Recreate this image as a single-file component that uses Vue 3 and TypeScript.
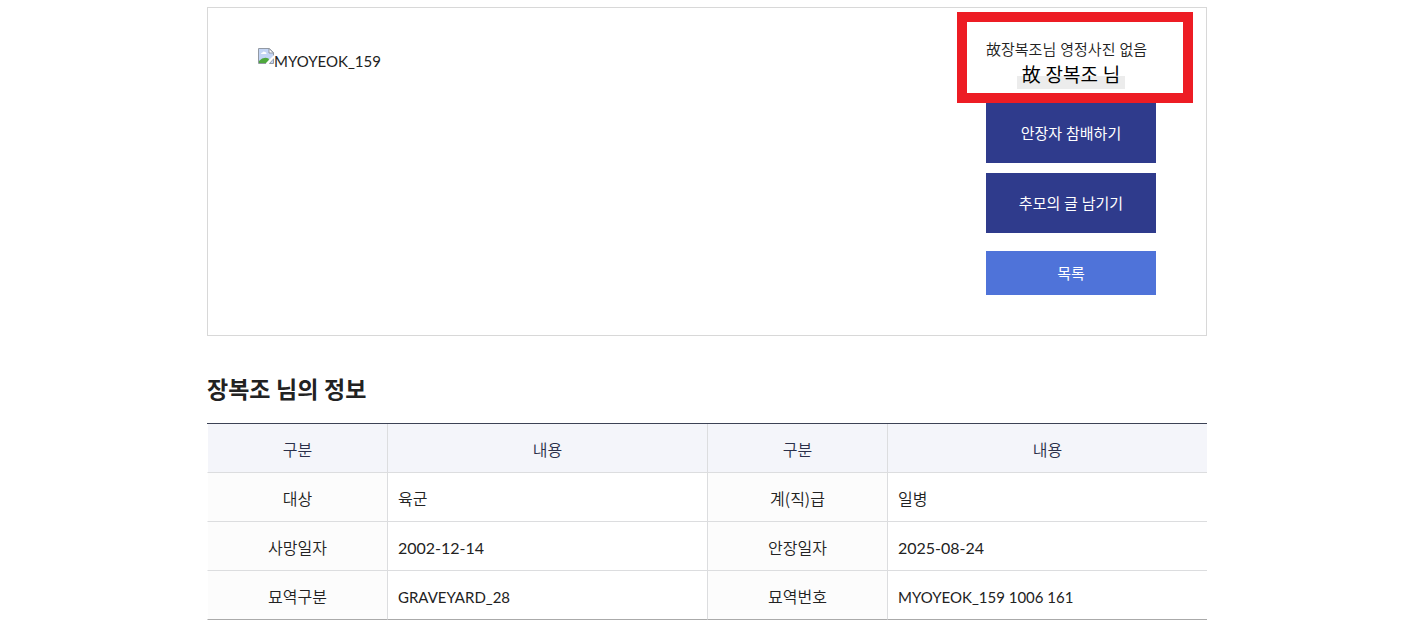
<script setup lang="ts">
interface InfoCell {
  label: string
  value: string
  kind?: 'code' | 'date'
}

const person = '장복조'
const rows: InfoCell[][] = [
  [{ label: '대상', value: '육군' }, { label: '계(직)급', value: '일병' }],
  [
    { label: '사망일자', value: '2002-12-14', kind: 'date' },
    { label: '안장일자', value: '2025-08-24', kind: 'date' },
  ],
  [
    { label: '묘역구분', value: 'GRAVEYARD_28', kind: 'code' },
    { label: '묘역번호', value: 'MYOYEOK_159 1006 161', kind: 'code' },
  ],
]
</script>

<template>
  <main class="page">
    <div class="container">
      <section class="card">
        <div class="photo">
          <svg class="broken" viewBox="0 0 16 16" aria-hidden="true">
            <path d="M0.5 0.5H11.5L15.5 4.5V9L9 15.5H0.5Z" fill="#fff" />
            <path d="M1 1H11V5H15V8.5L8.5 15H1Z" fill="#c3d5f5" />
            <path d="M3 6Q3 4.5 4.5 4.5Q5.5 3 7 4Q8.6 4 8.5 6Z" fill="#fff" />
            <path d="M1 15V13Q5.5 8.4 10.5 10.5L11 12L8.5 15Z" fill="#4ea83c" />
            <path d="M8.5 15.5H0.5V0.5H11.5L15.5 4.5V7.5" fill="none" stroke="#9299a3" />
            <path d="M11 0.5V5H15.5Z" fill="#fff" stroke="#9299a3" />
            <path d="M15.5 10.5V15.5H11.5Z" fill="#c3d5f5" stroke="#9299a3" />
            <path d="M8.5 16L16 8.5" stroke="#fff" stroke-width="2" />
          </svg>
          <span class="code">MYOYEOK_159</span>
        </div>
        <div class="side">
          <p class="no-photo">故{{ person }}님 영정사진 없음</p>
          <p class="name"><strong>故 {{ person }} 님</strong></p>
          <div class="highlight" aria-hidden="true"></div>
          <button type="button" class="btn">안장자 참배하기</button>
          <button type="button" class="btn">추모의 글 남기기</button>
          <a href="#list" class="btn list">목록</a>
        </div>
      </section>

      <h2 class="title">{{ person }} 님의 정보</h2>
      <table class="info">
        <colgroup>
          <col class="narrow" /><col class="wide" /><col class="narrow" /><col class="wide" />
        </colgroup>
        <thead>
          <tr>
            <th scope="col">구분</th>
            <th scope="col">내용</th>
            <th scope="col">구분</th>
            <th scope="col">내용</th>
          </tr>
        </thead>
        <tbody>
          <tr v-for="(row, i) in rows" :key="i">
            <template v-for="cell in row" :key="cell.label">
              <th scope="row">{{ cell.label }}</th>
              <td><span :class="cell.kind">{{ cell.value }}</span></td>
            </template>
          </tr>
        </tbody>
      </table>
    </div>
  </main>
</template>

<style>
body {
  margin: 0;
  background: #fff;
}
</style>

<style scoped>
.page {
  padding: 7px 17px 4px 15px;
  font-family: Lato, "Noto Sans CJK KR", sans-serif;
  font-size: 16px;
  font-weight: 350;
  line-height: 24px;
  color: #222;
}
.container {
  max-width: 1000px;
  margin: 0 auto;
}
.card {
  display: flex;
  justify-content: space-between;
  align-items: flex-start;
  padding: 30px 50px 40px;
  border: 1px solid #d8d8d8;
}
.photo {
  display: flex;
  align-items: flex-start;
  padding-top: 10px;
  line-height: 26px;
}
.broken {
  width: 16px;
  height: 16px;
}
.code,
.date {
  font-weight: 400;
}
.code {
  font-size: 15px;
}
.side {
  position: relative;
  display: flex;
  flex-direction: column;
  width: 170px;
}
.no-photo {
  margin: 0;
  font-size: 15px;
  line-height: 22px;
  white-space: nowrap;
}
.name {
  margin: 0 0 13px;
  text-align: center;
  font-size: 19px;
  line-height: 30px;
  color: #000;
}
.name strong {
  display: block;
  width: fit-content;
  margin: 0 auto;
  padding: 0 5px;
  font-weight: 400;
  background: linear-gradient(transparent 16px, #ececec 16px 29px, transparent 29px);
}
.highlight {
  position: absolute;
  top: -26px;
  left: -29px;
  right: -37px;
  height: 71px;
  border: 10px solid #ed1c24;
}
.btn {
  display: block;
  margin: 0 0 10px;
  padding: 18px 0;
  border: 0;
  font: inherit;
  font-size: 15px;
  font-weight: 400;
  line-height: 24px;
  text-align: center;
  text-decoration: none;
  color: #fff;
  background: #2f3b8c;
  cursor: pointer;
}
.btn.list {
  margin: 8px 0 0;
  padding: 10px 0;
  background: #4f73d9;
}
.title {
  margin: 35px 0 16px;
  font-size: 23px;
  line-height: 36px;
  font-weight: 700;
}
.info {
  width: 100%;
  table-layout: fixed;
  border-collapse: separate;
  border-spacing: 0;
  border-top: 1px solid #3c4255;
}
.narrow {
  width: 18%;
}
.wide {
  width: 32%;
}
.info th,
.info td {
  border-left: 1px solid #dcdddf;
  border-bottom: 1px solid #dcdddf;
  font-weight: inherit;
  background-clip: padding-box;
}
.info td {
  padding: 14px 10px 10px;
}
.info th {
  padding: 13px 10px 11px;
  font-family: "Noto Sans CJK KR", sans-serif;
  text-align: center;
  background-color: #fcfcfc;
}
.info thead th {
  color: #2a2f4a;
  background-color: #f4f5fa;
}
.info tr > :first-child {
  border-left-color: transparent;
}
.info tbody tr:last-child > * {
  border-bottom-color: #aaa;
}
</style>
